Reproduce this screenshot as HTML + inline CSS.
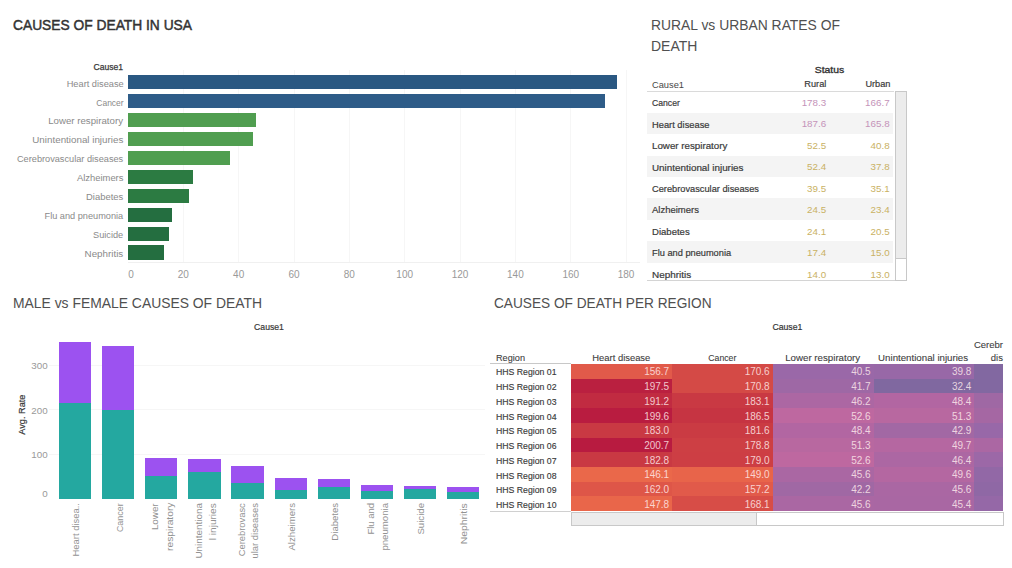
<!DOCTYPE html><html><head><meta charset="utf-8"><style>html,body{margin:0;padding:0;background:#fff;}body{width:1012px;height:568px;position:relative;overflow:hidden;font-family:"Liberation Sans", sans-serif;}.r{position:absolute;}.t{position:absolute;white-space:nowrap;line-height:1;}</style></head><body>
<div class="r" style="left:183.00px;top:70.00px;width:1.00px;height:192.00px;background:#f6f6f6;"></div>
<div class="r" style="left:238.00px;top:70.00px;width:1.00px;height:192.00px;background:#f6f6f6;"></div>
<div class="r" style="left:294.00px;top:70.00px;width:1.00px;height:192.00px;background:#f6f6f6;"></div>
<div class="r" style="left:349.00px;top:70.00px;width:1.00px;height:192.00px;background:#f6f6f6;"></div>
<div class="r" style="left:404.00px;top:70.00px;width:1.00px;height:192.00px;background:#f6f6f6;"></div>
<div class="r" style="left:460.00px;top:70.00px;width:1.00px;height:192.00px;background:#f6f6f6;"></div>
<div class="r" style="left:515.00px;top:70.00px;width:1.00px;height:192.00px;background:#f6f6f6;"></div>
<div class="r" style="left:570.00px;top:70.00px;width:1.00px;height:192.00px;background:#f6f6f6;"></div>
<div class="r" style="left:626.00px;top:70.00px;width:1.00px;height:192.00px;background:#f6f6f6;"></div>
<div class="r" style="left:128.00px;top:262.00px;width:512.00px;height:1.00px;background:#f0f0f0;"></div>
<div class="r" style="left:128.00px;top:75.00px;width:489.00px;height:14.00px;background:#2a5882;"></div>
<div class="r" style="left:128.00px;top:94.00px;width:477.00px;height:14.00px;background:#2e5c88;"></div>
<div class="r" style="left:128.00px;top:113.00px;width:128.00px;height:14.00px;background:#509e50;"></div>
<div class="r" style="left:128.00px;top:132.00px;width:125.00px;height:14.00px;background:#509e50;"></div>
<div class="r" style="left:128.00px;top:151.00px;width:102.00px;height:14.00px;background:#509e50;"></div>
<div class="r" style="left:128.00px;top:170.00px;width:65.00px;height:14.00px;background:#2c7b42;"></div>
<div class="r" style="left:128.00px;top:189.00px;width:61.00px;height:14.00px;background:#2c7b42;"></div>
<div class="r" style="left:128.00px;top:208.00px;width:44.00px;height:14.00px;background:#246e40;"></div>
<div class="r" style="left:128.00px;top:227.00px;width:41.00px;height:14.00px;background:#246e40;"></div>
<div class="r" style="left:128.00px;top:245.00px;width:36.00px;height:15.00px;background:#246e40;"></div>
<div class="r" style="left:647.00px;top:91.00px;width:247.00px;height:1.00px;background:#dadada;"></div>
<div class="r" style="left:647.00px;top:113.00px;width:246.00px;height:21.00px;background:#f4f4f4;"></div>
<div class="r" style="left:647.00px;top:156.00px;width:246.00px;height:21.00px;background:#f4f4f4;"></div>
<div class="r" style="left:647.00px;top:198.00px;width:246.00px;height:22.00px;background:#f4f4f4;"></div>
<div class="r" style="left:647.00px;top:241.00px;width:246.00px;height:22.00px;background:#f4f4f4;"></div>
<div class="r" style="left:647.00px;top:280.00px;width:248.00px;height:1.00px;background:#d4d4d4;"></div>
<div class="r" style="left:895.00px;top:91.00px;width:12.00px;height:190.00px;background:#ffffff;box-sizing:border-box;border:1px solid #c8c8c8;"></div>
<div class="r" style="left:896.00px;top:92.00px;width:10.00px;height:167.00px;background:#ececec;box-sizing:border-box;border-bottom:1px solid #c8c8c8;"></div>
<div class="r" style="left:49.00px;top:454.00px;width:436.00px;height:1.00px;background:#f6f6f6;"></div>
<div class="r" style="left:49.00px;top:409.00px;width:436.00px;height:1.00px;background:#f6f6f6;"></div>
<div class="r" style="left:49.00px;top:365.00px;width:436.00px;height:1.00px;background:#f6f6f6;"></div>
<div class="r" style="left:59.00px;top:342.00px;width:32.00px;height:61.00px;background:#9c52f0;"></div>
<div class="r" style="left:59.00px;top:403.00px;width:32.00px;height:96.00px;background:#24a8a0;"></div>
<div class="r" style="left:102.00px;top:346.00px;width:32.00px;height:64.00px;background:#9c52f0;"></div>
<div class="r" style="left:102.00px;top:410.00px;width:32.00px;height:89.00px;background:#24a8a0;"></div>
<div class="r" style="left:145.00px;top:458.00px;width:32.00px;height:18.00px;background:#9c52f0;"></div>
<div class="r" style="left:145.00px;top:476.00px;width:32.00px;height:23.00px;background:#24a8a0;"></div>
<div class="r" style="left:188.00px;top:459.00px;width:33.00px;height:13.00px;background:#9c52f0;"></div>
<div class="r" style="left:188.00px;top:472.00px;width:33.00px;height:27.00px;background:#24a8a0;"></div>
<div class="r" style="left:231.00px;top:466.00px;width:33.00px;height:17.00px;background:#9c52f0;"></div>
<div class="r" style="left:231.00px;top:483.00px;width:33.00px;height:16.00px;background:#24a8a0;"></div>
<div class="r" style="left:275.00px;top:478.00px;width:32.00px;height:12.00px;background:#9c52f0;"></div>
<div class="r" style="left:275.00px;top:490.00px;width:32.00px;height:9.00px;background:#24a8a0;"></div>
<div class="r" style="left:318.00px;top:479.00px;width:32.00px;height:8.00px;background:#9c52f0;"></div>
<div class="r" style="left:318.00px;top:487.00px;width:32.00px;height:12.00px;background:#24a8a0;"></div>
<div class="r" style="left:361.00px;top:485.00px;width:32.00px;height:6.00px;background:#9c52f0;"></div>
<div class="r" style="left:361.00px;top:491.00px;width:32.00px;height:8.00px;background:#24a8a0;"></div>
<div class="r" style="left:404.00px;top:486.00px;width:32.00px;height:3.00px;background:#9c52f0;"></div>
<div class="r" style="left:404.00px;top:489.00px;width:32.00px;height:10.00px;background:#24a8a0;"></div>
<div class="r" style="left:447.00px;top:487.00px;width:32.00px;height:5.00px;background:#9c52f0;"></div>
<div class="r" style="left:447.00px;top:492.00px;width:32.00px;height:7.00px;background:#24a8a0;"></div>
<div class="r" style="left:490.00px;top:363.00px;width:81.00px;height:1.00px;background:#c8c8c8;"></div>
<div class="r" style="left:571.00px;top:364.00px;width:101.00px;height:15.00px;background:rgb(225,90,74);"></div>
<div class="r" style="left:672.00px;top:364.00px;width:101.00px;height:15.00px;background:rgb(212,74,70);"></div>
<div class="r" style="left:773.00px;top:364.00px;width:101.00px;height:15.00px;background:rgb(154,104,168);"></div>
<div class="r" style="left:874.00px;top:364.00px;width:100.00px;height:15.00px;background:rgb(152,104,167);"></div>
<div class="r" style="left:974.00px;top:364.00px;width:29.00px;height:15.00px;background:rgb(130,104,161);"></div>
<div class="r" style="left:571.00px;top:379.00px;width:101.00px;height:14.00px;background:rgb(186,32,64);"></div>
<div class="r" style="left:672.00px;top:379.00px;width:101.00px;height:14.00px;background:rgb(212,74,70);"></div>
<div class="r" style="left:773.00px;top:379.00px;width:101.00px;height:14.00px;background:rgb(158,104,165);"></div>
<div class="r" style="left:874.00px;top:379.00px;width:100.00px;height:14.00px;background:rgb(128,104,160);"></div>
<div class="r" style="left:974.00px;top:379.00px;width:29.00px;height:14.00px;background:rgb(130,104,161);"></div>
<div class="r" style="left:571.00px;top:393.00px;width:101.00px;height:15.00px;background:rgb(193,43,65);"></div>
<div class="r" style="left:672.00px;top:393.00px;width:101.00px;height:15.00px;background:rgb(201,57,67);"></div>
<div class="r" style="left:773.00px;top:393.00px;width:101.00px;height:15.00px;background:rgb(172,103,163);"></div>
<div class="r" style="left:874.00px;top:393.00px;width:100.00px;height:15.00px;background:rgb(178,102,162);"></div>
<div class="r" style="left:974.00px;top:393.00px;width:29.00px;height:15.00px;background:rgb(159,104,164);"></div>
<div class="r" style="left:571.00px;top:408.00px;width:101.00px;height:15.00px;background:rgb(185,28,64);"></div>
<div class="r" style="left:672.00px;top:408.00px;width:101.00px;height:15.00px;background:rgb(198,52,66);"></div>
<div class="r" style="left:773.00px;top:408.00px;width:101.00px;height:15.00px;background:rgb(190,104,160);"></div>
<div class="r" style="left:874.00px;top:408.00px;width:100.00px;height:15.00px;background:rgb(184,104,160);"></div>
<div class="r" style="left:974.00px;top:408.00px;width:29.00px;height:15.00px;background:rgb(165,103,163);"></div>
<div class="r" style="left:571.00px;top:423.00px;width:101.00px;height:15.00px;background:rgb(201,57,67);"></div>
<div class="r" style="left:672.00px;top:423.00px;width:101.00px;height:15.00px;background:rgb(202,59,67);"></div>
<div class="r" style="left:773.00px;top:423.00px;width:101.00px;height:15.00px;background:rgb(178,102,162);"></div>
<div class="r" style="left:874.00px;top:423.00px;width:100.00px;height:15.00px;background:rgb(162,104,164);"></div>
<div class="r" style="left:974.00px;top:423.00px;width:29.00px;height:15.00px;background:rgb(152,104,168);"></div>
<div class="r" style="left:571.00px;top:438.00px;width:101.00px;height:14.00px;background:rgb(184,27,64);"></div>
<div class="r" style="left:672.00px;top:438.00px;width:101.00px;height:14.00px;background:rgb(205,63,68);"></div>
<div class="r" style="left:773.00px;top:438.00px;width:101.00px;height:14.00px;background:rgb(184,104,160);"></div>
<div class="r" style="left:874.00px;top:438.00px;width:100.00px;height:14.00px;background:rgb(181,103,161);"></div>
<div class="r" style="left:974.00px;top:438.00px;width:29.00px;height:14.00px;background:rgb(171,103,163);"></div>
<div class="r" style="left:571.00px;top:452.00px;width:101.00px;height:15.00px;background:rgb(201,57,67);"></div>
<div class="r" style="left:672.00px;top:452.00px;width:101.00px;height:15.00px;background:rgb(205,62,68);"></div>
<div class="r" style="left:773.00px;top:452.00px;width:101.00px;height:15.00px;background:rgb(190,104,160);"></div>
<div class="r" style="left:874.00px;top:452.00px;width:100.00px;height:15.00px;background:rgb(172,103,163);"></div>
<div class="r" style="left:974.00px;top:452.00px;width:29.00px;height:15.00px;background:rgb(156,104,167);"></div>
<div class="r" style="left:571.00px;top:467.00px;width:101.00px;height:15.00px;background:rgb(234,104,74);"></div>
<div class="r" style="left:672.00px;top:467.00px;width:101.00px;height:15.00px;background:rgb(232,100,74);"></div>
<div class="r" style="left:773.00px;top:467.00px;width:101.00px;height:15.00px;background:rgb(170,103,163);"></div>
<div class="r" style="left:874.00px;top:467.00px;width:100.00px;height:15.00px;background:rgb(180,103,161);"></div>
<div class="r" style="left:974.00px;top:467.00px;width:29.00px;height:15.00px;background:rgb(146,104,166);"></div>
<div class="r" style="left:571.00px;top:482.00px;width:101.00px;height:14.00px;background:rgb(222,86,72);"></div>
<div class="r" style="left:672.00px;top:482.00px;width:101.00px;height:14.00px;background:rgb(225,90,74);"></div>
<div class="r" style="left:773.00px;top:482.00px;width:101.00px;height:14.00px;background:rgb(160,104,164);"></div>
<div class="r" style="left:874.00px;top:482.00px;width:100.00px;height:14.00px;background:rgb(170,103,163);"></div>
<div class="r" style="left:974.00px;top:482.00px;width:29.00px;height:14.00px;background:rgb(143,104,165);"></div>
<div class="r" style="left:571.00px;top:496.00px;width:101.00px;height:15.00px;background:rgb(233,102,74);"></div>
<div class="r" style="left:672.00px;top:496.00px;width:101.00px;height:15.00px;background:rgb(215,77,71);"></div>
<div class="r" style="left:773.00px;top:496.00px;width:101.00px;height:15.00px;background:rgb(170,103,163);"></div>
<div class="r" style="left:874.00px;top:496.00px;width:100.00px;height:15.00px;background:rgb(169,103,163);"></div>
<div class="r" style="left:974.00px;top:496.00px;width:29.00px;height:15.00px;background:rgb(149,104,167);"></div>
<div class="r" style="left:490.00px;top:511.00px;width:81.00px;height:1.00px;background:#d0d0d0;"></div>
<div class="r" style="left:571.00px;top:512.00px;width:433.00px;height:14.00px;background:#ffffff;box-sizing:border-box;border:1px solid #c8c8c8;"></div>
<div class="r" style="left:572.00px;top:513.00px;width:185.00px;height:12.00px;background:#ececec;box-sizing:border-box;border-right:1px solid #c8c8c8;"></div>
<span class="t" style="left:12.90px;top:16.98px;font-size:15.5px;font-weight:400;color:#333333;-webkit-text-stroke:0.5px #333333;transform:scaleX(0.8894);transform-origin:left top;">CAUSES OF DEATH IN USA</span>
<span class="t" style="left:91.15px;top:63.03px;font-size:9.3px;font-weight:400;color:#383838;-webkit-text-stroke:0.25px #383838;transform:scaleX(0.9236);transform-origin:right top;">Cause1</span>
<span class="t" style="left:66.51px;top:79.61px;font-size:9.2px;font-weight:400;color:#8a8a8a;transform:scaleX(1.0055);transform-origin:right top;">Heart disease</span>
<span class="t" style="left:93.58px;top:98.52px;font-size:9.2px;font-weight:400;color:#8a8a8a;transform:scaleX(0.9215);transform-origin:right top;">Cancer</span>
<span class="t" style="left:52.22px;top:117.43px;font-size:9.2px;font-weight:400;color:#8a8a8a;transform:scaleX(1.0538);transform-origin:right top;">Lower respiratory</span>
<span class="t" style="left:37.90px;top:136.34px;font-size:9.2px;font-weight:400;color:#8a8a8a;transform:scaleX(1.0669);transform-origin:right top;">Unintentional injuries</span>
<span class="t" style="left:16.98px;top:155.25px;font-size:9.2px;font-weight:400;color:#8a8a8a;">Cerebrovascular diseases</span>
<span class="t" style="left:77.75px;top:174.16px;font-size:9.2px;font-weight:400;color:#8a8a8a;transform:scaleX(1.0230);transform-origin:right top;">Alzheimers</span>
<span class="t" style="left:86.93px;top:193.07px;font-size:9.2px;font-weight:400;color:#8a8a8a;transform:scaleX(1.0258);transform-origin:right top;">Diabetes</span>
<span class="t" style="left:44.53px;top:211.98px;font-size:9.2px;font-weight:400;color:#8a8a8a;">Flu and pneumonia</span>
<span class="t" style="left:93.06px;top:230.89px;font-size:9.2px;font-weight:400;color:#8a8a8a;">Suicide</span>
<span class="t" style="left:86.93px;top:249.80px;font-size:9.2px;font-weight:400;color:#8a8a8a;transform:scaleX(1.0671);transform-origin:right top;">Nephritis</span>
<span class="t" style="left:128.22px;top:270.14px;font-size:10px;font-weight:400;color:#999;">0</span>
<span class="t" style="left:177.78px;top:270.14px;font-size:10px;font-weight:400;color:#999;">20</span>
<span class="t" style="left:233.12px;top:270.14px;font-size:10px;font-weight:400;color:#999;">40</span>
<span class="t" style="left:288.46px;top:270.14px;font-size:10px;font-weight:400;color:#999;">60</span>
<span class="t" style="left:343.80px;top:270.14px;font-size:10px;font-weight:400;color:#999;">80</span>
<span class="t" style="left:396.36px;top:270.14px;font-size:10px;font-weight:400;color:#999;">100</span>
<span class="t" style="left:451.70px;top:270.14px;font-size:10px;font-weight:400;color:#999;">120</span>
<span class="t" style="left:507.04px;top:270.14px;font-size:10px;font-weight:400;color:#999;">140</span>
<span class="t" style="left:562.38px;top:270.14px;font-size:10px;font-weight:400;color:#999;">160</span>
<span class="t" style="left:617.72px;top:270.14px;font-size:10px;font-weight:400;color:#999;">180</span>
<span class="t" style="left:651.30px;top:17.45px;font-size:15.3px;font-weight:400;color:#505050;transform:scaleX(0.9076);transform-origin:left top;">RURAL vs URBAN RATES OF</span>
<span class="t" style="left:651.30px;top:38.05px;font-size:15.3px;font-weight:400;color:#505050;transform:scaleX(0.9129);transform-origin:left top;">DEATH</span>
<span class="t" style="left:815.73px;top:65.46px;font-size:9.5px;font-weight:400;color:#333;-webkit-text-stroke:0.35px #333;transform:scaleX(1.0951);transform-origin:center top;">Status</span>
<span class="t" style="left:652.00px;top:80.16px;font-size:9.5px;font-weight:400;color:#484848;transform:scaleX(0.9771);transform-origin:left top;">Cause1</span>
<span class="t" style="left:803.85px;top:79.16px;font-size:9.5px;font-weight:400;color:#3a3a3a;-webkit-text-stroke:0.2px #3a3a3a;transform:scaleX(0.9690);transform-origin:center top;">Rural</span>
<span class="t" style="left:864.56px;top:79.16px;font-size:9.5px;font-weight:400;color:#3a3a3a;-webkit-text-stroke:0.2px #3a3a3a;transform:scaleX(0.9662);transform-origin:center top;">Urban</span>
<span class="t" style="left:652.00px;top:98.16px;font-size:9.5px;font-weight:400;color:#3a3a3a;-webkit-text-stroke:0.2px #3a3a3a;transform:scaleX(0.9078);transform-origin:left top;">Cancer</span>
<span class="t" style="left:801.67px;top:97.90px;font-size:9.8px;font-weight:400;color:#c493b9;">178.3</span>
<span class="t" style="left:865.07px;top:97.90px;font-size:9.8px;font-weight:400;color:#c493b9;">166.7</span>
<span class="t" style="left:652.00px;top:119.61px;font-size:9.5px;font-weight:400;color:#3a3a3a;-webkit-text-stroke:0.2px #3a3a3a;transform:scaleX(0.9808);transform-origin:left top;">Heart disease</span>
<span class="t" style="left:801.67px;top:119.35px;font-size:9.8px;font-weight:400;color:#c493b9;">187.6</span>
<span class="t" style="left:865.07px;top:119.35px;font-size:9.8px;font-weight:400;color:#c493b9;">165.8</span>
<span class="t" style="left:652.00px;top:141.06px;font-size:9.5px;font-weight:400;color:#3a3a3a;-webkit-text-stroke:0.2px #3a3a3a;transform:scaleX(1.0260);transform-origin:left top;">Lower respiratory</span>
<span class="t" style="left:807.12px;top:140.80px;font-size:9.8px;font-weight:400;color:#c9b163;">52.5</span>
<span class="t" style="left:870.52px;top:140.80px;font-size:9.8px;font-weight:400;color:#c9b163;">40.8</span>
<span class="t" style="left:652.00px;top:162.51px;font-size:9.5px;font-weight:400;color:#3a3a3a;-webkit-text-stroke:0.2px #3a3a3a;transform:scaleX(1.0374);transform-origin:left top;">Unintentional injuries</span>
<span class="t" style="left:807.12px;top:162.25px;font-size:9.8px;font-weight:400;color:#c9b163;">52.4</span>
<span class="t" style="left:870.52px;top:162.25px;font-size:9.8px;font-weight:400;color:#c9b163;">37.8</span>
<span class="t" style="left:652.00px;top:183.96px;font-size:9.5px;font-weight:400;color:#3a3a3a;-webkit-text-stroke:0.2px #3a3a3a;transform:scaleX(0.9741);transform-origin:left top;">Cerebrovascular diseases</span>
<span class="t" style="left:807.12px;top:183.70px;font-size:9.8px;font-weight:400;color:#c9b163;">39.5</span>
<span class="t" style="left:870.52px;top:183.70px;font-size:9.8px;font-weight:400;color:#c9b163;">35.1</span>
<span class="t" style="left:652.00px;top:205.41px;font-size:9.5px;font-weight:400;color:#3a3a3a;-webkit-text-stroke:0.2px #3a3a3a;">Alzheimers</span>
<span class="t" style="left:807.12px;top:205.15px;font-size:9.8px;font-weight:400;color:#c9b163;">24.5</span>
<span class="t" style="left:870.52px;top:205.15px;font-size:9.8px;font-weight:400;color:#c9b163;">23.4</span>
<span class="t" style="left:652.00px;top:226.86px;font-size:9.5px;font-weight:400;color:#3a3a3a;-webkit-text-stroke:0.2px #3a3a3a;transform:scaleX(1.0053);transform-origin:left top;">Diabetes</span>
<span class="t" style="left:807.12px;top:226.60px;font-size:9.8px;font-weight:400;color:#c9b163;">24.1</span>
<span class="t" style="left:870.52px;top:226.60px;font-size:9.8px;font-weight:400;color:#c9b163;">20.5</span>
<span class="t" style="left:652.00px;top:248.31px;font-size:9.5px;font-weight:400;color:#3a3a3a;-webkit-text-stroke:0.2px #3a3a3a;transform:scaleX(0.9724);transform-origin:left top;">Flu and pneumonia</span>
<span class="t" style="left:807.12px;top:248.05px;font-size:9.8px;font-weight:400;color:#c9b163;">17.4</span>
<span class="t" style="left:870.52px;top:248.05px;font-size:9.8px;font-weight:400;color:#c9b163;">15.0</span>
<span class="t" style="left:652.00px;top:269.76px;font-size:9.5px;font-weight:400;color:#3a3a3a;-webkit-text-stroke:0.2px #3a3a3a;transform:scaleX(1.0453);transform-origin:left top;">Nephritis</span>
<span class="t" style="left:807.12px;top:269.50px;font-size:9.8px;font-weight:400;color:#c9b163;">14.0</span>
<span class="t" style="left:870.52px;top:269.50px;font-size:9.8px;font-weight:400;color:#c9b163;">13.0</span>
<span class="t" style="left:12.70px;top:295.18px;font-size:15.5px;font-weight:400;color:#505050;transform:scaleX(0.8960);transform-origin:left top;">MALE vs FEMALE CAUSES OF DEATH</span>
<span class="t" style="left:252.58px;top:322.63px;font-size:9.3px;font-weight:400;color:#383838;-webkit-text-stroke:0.2px #383838;transform:scaleX(0.9299);transform-origin:center top;">Cause1</span>
<span class="t" style="left:2.27px;top:410.35px;font-size:9.3px;font-weight:400;color:#383838;-webkit-text-stroke:0.2px #383838;transform:rotate(-90deg) scaleX(0.9839);transform-origin:center center;">Avg. Rate</span>
<span class="t" style="left:31.24px;top:361.40px;font-size:9.8px;font-weight:400;color:#999;">300</span>
<span class="t" style="left:31.24px;top:405.80px;font-size:9.8px;font-weight:400;color:#999;">200</span>
<span class="t" style="left:31.24px;top:450.30px;font-size:9.8px;font-weight:400;color:#999;">100</span>
<span class="t" style="left:42.15px;top:488.50px;font-size:9.8px;font-weight:400;color:#999;">0</span>
<span class="t" style="left:48.91px;top:524.95px;font-size:9.5px;font-weight:400;color:#929292;transform:rotate(-90deg) scaleX(0.9912);transform-origin:center center;">Heart disea..</span>
<span class="t" style="left:103.67px;top:512.60px;font-size:9.5px;font-weight:400;color:#929292;transform:rotate(-90deg) scaleX(0.9371);transform-origin:center center;">Cancer</span>
<span class="t" style="left:142.27px;top:511.60px;font-size:9.5px;font-weight:400;color:#929292;transform:rotate(-90deg) scaleX(1.0319);transform-origin:center center;">Lower</span>
<span class="t" style="left:146.57px;top:522.45px;font-size:9.5px;font-weight:400;color:#929292;transform:rotate(-90deg) scaleX(1.0786);transform-origin:center center;">respiratory</span>
<span class="t" style="left:171.66px;top:526.05px;font-size:9.5px;font-weight:400;color:#929292;transform:rotate(-90deg) scaleX(1.0420);transform-origin:center center;">Unintentiona</span>
<span class="t" style="left:194.71px;top:516.75px;font-size:9.5px;font-weight:400;color:#929292;transform:rotate(-90deg) scaleX(1.0614);transform-origin:center center;">l injuries</span>
<span class="t" style="left:214.54px;top:524.75px;font-size:9.5px;font-weight:400;color:#929292;transform:rotate(-90deg) scaleX(0.9840);transform-origin:center center;">Cerebrovasc</span>
<span class="t" style="left:227.28px;top:526.05px;font-size:9.5px;font-weight:400;color:#929292;transform:rotate(-90deg) scaleX(0.9931);transform-origin:center center;">ular diseases</span>
<span class="t" style="left:268.00px;top:522.05px;font-size:9.5px;font-weight:400;color:#929292;transform:rotate(-90deg) scaleX(1.0128);transform-origin:center center;">Alzheimers</span>
<span class="t" style="left:315.88px;top:517.15px;font-size:9.5px;font-weight:400;color:#929292;transform:rotate(-90deg) scaleX(1.0080);transform-origin:center center;">Diabetes</span>
<span class="t" style="left:355.02px;top:514.10px;font-size:9.5px;font-weight:400;color:#929292;transform:rotate(-90deg) scaleX(1.0004);transform-origin:center center;">Flu and</span>
<span class="t" style="left:361.15px;top:522.10px;font-size:9.5px;font-weight:400;color:#929292;transform:rotate(-90deg) scaleX(1.0146);transform-origin:center center;">pneumonia</span>
<span class="t" style="left:405.30px;top:514.10px;font-size:9.5px;font-weight:400;color:#929292;transform:rotate(-90deg) scaleX(1.0169);transform-origin:center center;">Suicide</span>
<span class="t" style="left:445.27px;top:518.75px;font-size:9.5px;font-weight:400;color:#929292;transform:rotate(-90deg) scaleX(1.0933);transform-origin:center center;">Nephritis</span>
<span class="t" style="left:494.40px;top:295.38px;font-size:15.5px;font-weight:400;color:#505050;transform:scaleX(0.8814);transform-origin:left top;">CAUSES OF DEATH PER REGION</span>
<span class="t" style="left:770.62px;top:322.46px;font-size:9.5px;font-weight:400;color:#333;-webkit-text-stroke:0.2px #333;transform:scaleX(0.9160);transform-origin:center top;">Cause1</span>
<span class="t" style="left:495.70px;top:352.76px;font-size:9.5px;font-weight:400;color:#404040;-webkit-text-stroke:0.1px #404040;transform:scaleX(0.9632);transform-origin:left top;">Region</span>
<span class="t" style="left:591.69px;top:352.76px;font-size:9.5px;font-weight:400;color:#404040;-webkit-text-stroke:0.1px #404040;transform:scaleX(0.9893);transform-origin:center top;">Heart disease</span>
<span class="t" style="left:706.69px;top:352.76px;font-size:9.5px;font-weight:400;color:#404040;-webkit-text-stroke:0.1px #404040;transform:scaleX(0.9143);transform-origin:center top;">Cancer</span>
<span class="t" style="left:785.80px;top:352.76px;font-size:9.5px;font-weight:400;color:#404040;-webkit-text-stroke:0.1px #404040;transform:scaleX(1.0219);transform-origin:center top;">Lower respiratory</span>
<span class="t" style="left:878.90px;top:352.76px;font-size:9.5px;font-weight:400;color:#404040;-webkit-text-stroke:0.1px #404040;transform:scaleX(1.0204);transform-origin:center top;">Unintentional injuries</span>
<span class="t" style="left:973.95px;top:340.46px;font-size:9.5px;font-weight:400;color:#404040;-webkit-text-stroke:0.1px #404040;">Cerebr</span>
<span class="t" style="left:990.84px;top:352.76px;font-size:9.5px;font-weight:400;color:#404040;-webkit-text-stroke:0.1px #404040;">dis</span>
<span class="t" style="left:496.00px;top:367.46px;font-size:9.5px;font-weight:400;color:#3a3a3a;-webkit-text-stroke:0.15px #3a3a3a;transform:scaleX(0.9164);transform-origin:left top;">HHS Region 01</span>
<span class="t" style="left:644.17px;top:367.34px;font-size:10px;font-weight:400;color:rgba(255,238,238,0.82);">156.7</span>
<span class="t" style="left:744.67px;top:367.34px;font-size:10px;font-weight:400;color:rgba(255,238,238,0.82);">170.6</span>
<span class="t" style="left:851.23px;top:367.34px;font-size:10px;font-weight:400;color:rgba(255,238,238,0.82);">40.5</span>
<span class="t" style="left:951.93px;top:367.34px;font-size:10px;font-weight:400;color:rgba(255,238,238,0.82);">39.8</span>
<span class="t" style="left:496.00px;top:382.18px;font-size:9.5px;font-weight:400;color:#3a3a3a;-webkit-text-stroke:0.15px #3a3a3a;transform:scaleX(0.9164);transform-origin:left top;">HHS Region 02</span>
<span class="t" style="left:644.17px;top:382.06px;font-size:10px;font-weight:400;color:rgba(255,238,238,0.82);">197.5</span>
<span class="t" style="left:744.67px;top:382.06px;font-size:10px;font-weight:400;color:rgba(255,238,238,0.82);">170.8</span>
<span class="t" style="left:851.23px;top:382.06px;font-size:10px;font-weight:400;color:rgba(255,238,238,0.82);">41.7</span>
<span class="t" style="left:951.93px;top:382.06px;font-size:10px;font-weight:400;color:rgba(255,238,238,0.82);">32.4</span>
<span class="t" style="left:496.00px;top:396.90px;font-size:9.5px;font-weight:400;color:#3a3a3a;-webkit-text-stroke:0.15px #3a3a3a;transform:scaleX(0.9164);transform-origin:left top;">HHS Region 03</span>
<span class="t" style="left:644.17px;top:396.78px;font-size:10px;font-weight:400;color:rgba(255,238,238,0.82);">191.2</span>
<span class="t" style="left:744.67px;top:396.78px;font-size:10px;font-weight:400;color:rgba(255,238,238,0.82);">183.1</span>
<span class="t" style="left:851.23px;top:396.78px;font-size:10px;font-weight:400;color:rgba(255,238,238,0.82);">46.2</span>
<span class="t" style="left:951.93px;top:396.78px;font-size:10px;font-weight:400;color:rgba(255,238,238,0.82);">48.4</span>
<span class="t" style="left:496.00px;top:411.62px;font-size:9.5px;font-weight:400;color:#3a3a3a;-webkit-text-stroke:0.15px #3a3a3a;transform:scaleX(0.9164);transform-origin:left top;">HHS Region 04</span>
<span class="t" style="left:644.17px;top:411.50px;font-size:10px;font-weight:400;color:rgba(255,238,238,0.82);">199.6</span>
<span class="t" style="left:744.67px;top:411.50px;font-size:10px;font-weight:400;color:rgba(255,238,238,0.82);">186.5</span>
<span class="t" style="left:851.23px;top:411.50px;font-size:10px;font-weight:400;color:rgba(255,238,238,0.82);">52.6</span>
<span class="t" style="left:951.93px;top:411.50px;font-size:10px;font-weight:400;color:rgba(255,238,238,0.82);">51.3</span>
<span class="t" style="left:496.00px;top:426.34px;font-size:9.5px;font-weight:400;color:#3a3a3a;-webkit-text-stroke:0.15px #3a3a3a;transform:scaleX(0.9164);transform-origin:left top;">HHS Region 05</span>
<span class="t" style="left:644.17px;top:426.22px;font-size:10px;font-weight:400;color:rgba(255,238,238,0.82);">183.0</span>
<span class="t" style="left:744.67px;top:426.22px;font-size:10px;font-weight:400;color:rgba(255,238,238,0.82);">181.6</span>
<span class="t" style="left:851.23px;top:426.22px;font-size:10px;font-weight:400;color:rgba(255,238,238,0.82);">48.4</span>
<span class="t" style="left:951.93px;top:426.22px;font-size:10px;font-weight:400;color:rgba(255,238,238,0.82);">42.9</span>
<span class="t" style="left:496.00px;top:441.06px;font-size:9.5px;font-weight:400;color:#3a3a3a;-webkit-text-stroke:0.15px #3a3a3a;transform:scaleX(0.9164);transform-origin:left top;">HHS Region 06</span>
<span class="t" style="left:644.17px;top:440.94px;font-size:10px;font-weight:400;color:rgba(255,238,238,0.82);">200.7</span>
<span class="t" style="left:744.67px;top:440.94px;font-size:10px;font-weight:400;color:rgba(255,238,238,0.82);">178.8</span>
<span class="t" style="left:851.23px;top:440.94px;font-size:10px;font-weight:400;color:rgba(255,238,238,0.82);">51.3</span>
<span class="t" style="left:951.93px;top:440.94px;font-size:10px;font-weight:400;color:rgba(255,238,238,0.82);">49.7</span>
<span class="t" style="left:496.00px;top:455.78px;font-size:9.5px;font-weight:400;color:#3a3a3a;-webkit-text-stroke:0.15px #3a3a3a;transform:scaleX(0.9164);transform-origin:left top;">HHS Region 07</span>
<span class="t" style="left:644.17px;top:455.66px;font-size:10px;font-weight:400;color:rgba(255,238,238,0.82);">182.8</span>
<span class="t" style="left:744.67px;top:455.66px;font-size:10px;font-weight:400;color:rgba(255,238,238,0.82);">179.0</span>
<span class="t" style="left:851.23px;top:455.66px;font-size:10px;font-weight:400;color:rgba(255,238,238,0.82);">52.6</span>
<span class="t" style="left:951.93px;top:455.66px;font-size:10px;font-weight:400;color:rgba(255,238,238,0.82);">46.4</span>
<span class="t" style="left:496.00px;top:470.50px;font-size:9.5px;font-weight:400;color:#3a3a3a;-webkit-text-stroke:0.15px #3a3a3a;transform:scaleX(0.9164);transform-origin:left top;">HHS Region 08</span>
<span class="t" style="left:644.17px;top:470.38px;font-size:10px;font-weight:400;color:rgba(255,238,238,0.82);">146.1</span>
<span class="t" style="left:744.67px;top:470.38px;font-size:10px;font-weight:400;color:rgba(255,238,238,0.82);">149.0</span>
<span class="t" style="left:851.23px;top:470.38px;font-size:10px;font-weight:400;color:rgba(255,238,238,0.82);">45.6</span>
<span class="t" style="left:951.93px;top:470.38px;font-size:10px;font-weight:400;color:rgba(255,238,238,0.82);">49.6</span>
<span class="t" style="left:496.00px;top:485.22px;font-size:9.5px;font-weight:400;color:#3a3a3a;-webkit-text-stroke:0.15px #3a3a3a;transform:scaleX(0.9164);transform-origin:left top;">HHS Region 09</span>
<span class="t" style="left:644.17px;top:485.10px;font-size:10px;font-weight:400;color:rgba(255,238,238,0.82);">162.0</span>
<span class="t" style="left:744.67px;top:485.10px;font-size:10px;font-weight:400;color:rgba(255,238,238,0.82);">157.2</span>
<span class="t" style="left:851.23px;top:485.10px;font-size:10px;font-weight:400;color:rgba(255,238,238,0.82);">42.2</span>
<span class="t" style="left:951.93px;top:485.10px;font-size:10px;font-weight:400;color:rgba(255,238,238,0.82);">45.6</span>
<span class="t" style="left:496.00px;top:499.94px;font-size:9.5px;font-weight:400;color:#3a3a3a;-webkit-text-stroke:0.15px #3a3a3a;transform:scaleX(0.9164);transform-origin:left top;">HHS Region 10</span>
<span class="t" style="left:644.17px;top:499.82px;font-size:10px;font-weight:400;color:rgba(255,238,238,0.82);">147.8</span>
<span class="t" style="left:744.67px;top:499.82px;font-size:10px;font-weight:400;color:rgba(255,238,238,0.82);">168.1</span>
<span class="t" style="left:851.23px;top:499.82px;font-size:10px;font-weight:400;color:rgba(255,238,238,0.82);">45.6</span>
<span class="t" style="left:951.93px;top:499.82px;font-size:10px;font-weight:400;color:rgba(255,238,238,0.82);">45.4</span>
</body></html>
